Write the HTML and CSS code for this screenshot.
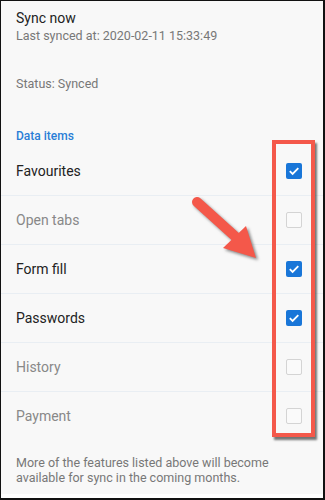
FILE: index.html
```
<!DOCTYPE html>
<html>
<head>
<meta charset="utf-8">
<link rel="stylesheet" href="styles.css">
</head>
<body>
<div class="page">
  <div class="sync">
    <div class="title">Sync now</div>
    <div class="sub">Last synced at: 2020-02-11 15:33:49</div>
  </div>
  <div class="status">Status: Synced</div>
  <div class="section">Data items</div>
  <div class="list">
    <div class="row"><span class="label">Favourites</span><span class="cb on"><svg viewBox="0 0 16 16"><path d="M3.8 8.2 L6.6 11 L12.3 5.2" fill="none" stroke="#fff" stroke-width="1.8"/></svg></span></div>
    <div class="row"><span class="label off">Open tabs</span><span class="cb"></span></div>
    <div class="row"><span class="label">Form fill</span><span class="cb on"><svg viewBox="0 0 16 16"><path d="M3.8 8.2 L6.6 11 L12.3 5.2" fill="none" stroke="#fff" stroke-width="1.8"/></svg></span></div>
    <div class="row"><span class="label">Passwords</span><span class="cb on"><svg viewBox="0 0 16 16"><path d="M3.8 8.2 L6.6 11 L12.3 5.2" fill="none" stroke="#fff" stroke-width="1.8"/></svg></span></div>
    <div class="row"><span class="label off">History</span><span class="cb"></span></div>
    <div class="row last"><span class="label off">Payment</span><span class="cb"></span></div>
  </div>
  <div class="note">More of the features listed above will become available for sync in the coming months.</div>
  <div class="bottom"></div>
  <div class="frame"></div>
  <svg class="arrow" viewBox="0 0 325 500" width="325" height="500">
    <line x1="197" y1="202" x2="238" y2="239" stroke="#f4584a" stroke-width="10" stroke-linecap="round"/>
    <polygon points="223,248 256,258 246,226" fill="#f4584a"/>
  </svg>
</div>
</body>
</html>
```
FILE: styles.css
```
html, body { margin: 0; padding: 0; }
body { background: #f8f8f8; font-family: Roboto, "Liberation Sans", sans-serif; }
.page {
  position: relative;
  box-sizing: border-box;
  width: 325px; height: 500px;
  border-left: 1px solid #111; border-top: 1px solid #111;
  border-right: 2px solid #111; border-bottom: 2px solid #111;
  background: #f8f8f8;
  padding-left: 15px;
  display: flex; flex-direction: column;
  overflow: hidden;
}
.sync { padding-top: 7px; }
.title { font-size: 14px; line-height: 20px; color: #222; }
.sub { font-size: 12.5px; line-height: 16px; color: #777; }
.status { font-size: 12.5px; line-height: 16px; color: #777; margin-top: 32px; }
.section { font-size: 12px; line-height: 16px; color: #2a7ed6; font-weight: 500; margin-top: 36px; }
.list { margin-top: 3px; margin-left: -15px; }
.row {
  height: 48px; border-bottom: 1px solid #e9eef3;
  display: flex; align-items: center; justify-content: space-between;
  padding: 0 21px 0 15px;
}
.row.last { border-bottom: none; }
.label { font-size: 14px; color: #222; }
.label.off { color: #888; }
.cb {
  width: 16px; height: 16px; box-sizing: border-box;
  border: 1.5px solid #d4d4d4; border-radius: 2px; background: #fafafa;
  display: flex;
}
.cb.on { background: #1976d8; border: none; }
.cb svg { width: 16px; height: 16px; }
.note { font-size: 12.5px; line-height: 14.5px; color: #777; margin-top: 16px; padding-right: 20px; }
.bottom { flex: 1; }
.page::after {
  content: ""; position: absolute; left: 0; right: 0; bottom: 0; height: 4px; background: #fff;
}
.frame {
  position: absolute; left: 271px; top: 139px; width: 35px; height: 289px;
  border: 4px solid #f4584a;
  box-shadow: 2px 3px 2px rgba(60,60,60,0.7);
}
.arrow {
  position: absolute; left: -1px; top: -1px;
  filter: drop-shadow(2px 2px 1.5px rgba(60,60,60,0.6));
  pointer-events: none;
}
```
